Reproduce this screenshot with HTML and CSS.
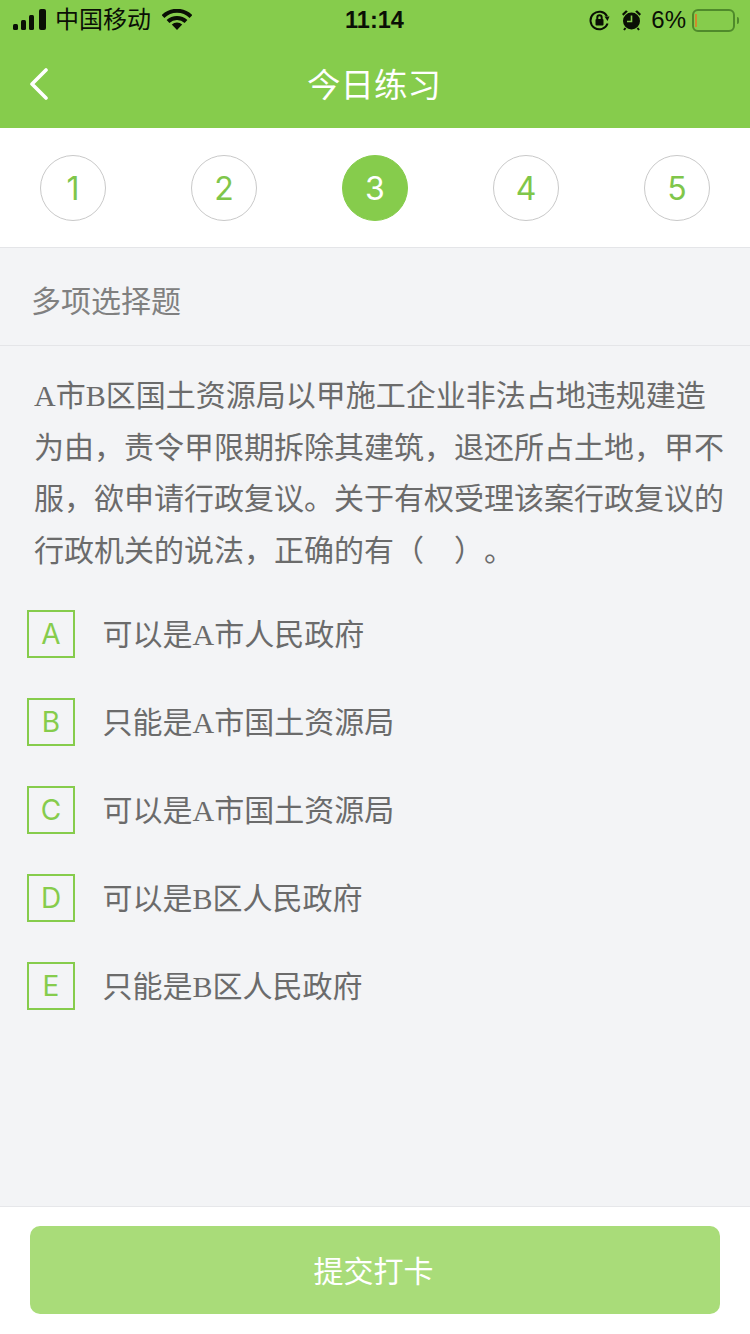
FILE: index.html
```html
<!DOCTYPE html>
<html lang="zh-CN">
<head>
  <meta charset="UTF-8">
  <meta name="viewport" content="width=device-width, initial-scale=1.0">
  <title>今日练习</title>
  <link rel="stylesheet" href="styles.css">
</head>

<body>
<div id="container">
  <div id="top_box">
    <div id="status_bar">
      <div class="status_left">
        <svg class="signal" width="34" height="22" viewBox="0 0 34 22">
          <rect x="0" y="15" width="5" height="6" rx="1.5" />
          <rect x="8" y="11" width="5" height="10" rx="1.5" />
          <rect x="16" y="6" width="5" height="15" rx="1.5" />
          <rect x="26" y="0" width="7" height="21" rx="2" />
        </svg>
        <span class="carrier">中国移动</span>
        <svg class="wifi" width="30" height="22" viewBox="0 0 30 22">
          <path d="M1 7.5 A20 20 0 0 1 29 7.5" />
          <path d="M6 12.5 A13 13 0 0 1 24 12.5" />
          <path class="wifi_dot" d="M15 21 L9.8 15.6 A7.5 7.5 0 0 1 20.2 15.6 Z" />
        </svg>
      </div>
      <div class="status_time">11:14</div>
      <div class="status_right">
        <svg class="lock" width="21" height="21" viewBox="0 0 21 21">
          <path d="M18 6.2 A8.8 8.8 0 1 0 18.6 13.5" />
          <path class="solid" d="M15.5 6.5 L20.5 6.5 L18.5 11 Z" />
          <rect class="solid" x="6.5" y="9" width="8" height="6.5" rx="1" />
          <path d="M8.3 9 V7.5 A2.2 2.2 0 0 1 12.7 7.5 V9" />
        </svg>
        <svg class="alarm" width="21" height="22" viewBox="0 0 21 22">
          <circle class="solid" cx="10.5" cy="12" r="8.5" />
          <path class="solid" d="M1 5 L5 1.2 L6.8 2.6 L2.4 6.8 Z M20 5 L16 1.2 L14.2 2.6 L18.6 6.8 Z" />
          <path class="hands" d="M10.5 6.5 V12.5 H6" />
          <path d="M4.5 19 L3 21 M16.5 19 L18 21" />
        </svg>
        <span class="percent">6%</span>
        <div class="battery"><div class="battery_level"></div></div>
        <div class="battery_tip"></div>
      </div>
    </div>

    <div id="nav_bar">
      <svg class="back" width="20" height="32" viewBox="0 0 20 32">
        <path d="M17 2 L3 16 L17 30" />
      </svg>
      <div class="nav_title">今日练习</div>
    </div>
  </div>

  <div id="steps">
    <div class="step">1</div>
    <div class="step">2</div>
    <div class="step active">3</div>
    <div class="step">4</div>
    <div class="step">5</div>
  </div>

  <div id="main_box">
    <div class="type_label">多项选择题</div>

    <div class="question">A市B区国土资源局以甲施工企业非法占地违规建造为由，责令甲限期拆除其建筑，退还所占土地，甲不服，欲申请行政复议。关于有权受理该案行政复议的行政机关的说法，正确的有（&emsp;）。</div>

    <div class="options">
      <div class="option">
        <div class="option_key">A</div>
        <div class="option_text">可以是A市人民政府</div>
      </div>
      <div class="option">
        <div class="option_key">B</div>
        <div class="option_text">只能是A市国土资源局</div>
      </div>
      <div class="option">
        <div class="option_key">C</div>
        <div class="option_text">可以是A市国土资源局</div>
      </div>
      <div class="option">
        <div class="option_key">D</div>
        <div class="option_text">可以是B区人民政府</div>
      </div>
      <div class="option">
        <div class="option_key">E</div>
        <div class="option_text">只能是B区人民政府</div>
      </div>
    </div>
  </div>

  <div id="footer_box">
    <div class="submit">提交打卡</div>
  </div>
</div>
</body>
</html>
```

FILE: styles.css
```css
* {
    box-sizing: border-box;
    padding: 0;
    margin: 0;
    font-family: "Liberation Sans", "Noto Sans CJK SC", sans-serif;
}

body, html {
    width: 100%;
    height: 100%;
    background: #f3f4f6;
    overflow: hidden;
}

#container {
    display: flex;
    flex-direction: column;
    height: 1334px;
}

#top_box {
    background: #86cc4c;
    height: 128px;
}

#status_bar {
    display: flex;
    align-items: center;
    justify-content: space-between;
    height: 40px;
    padding: 0 11px 0 13px;
    color: #0a0f05;
}

.status_left, .status_right {
    display: flex;
    align-items: center;
    width: 240px;
}

.status_right {
    justify-content: flex-end;
}

.signal {
    fill: #0a0f05;
    margin-right: 8px;
}

.carrier {
    font-size: 24px;
    line-height: 42px;
    width: 96px;
    white-space: nowrap;
}

.wifi {
    margin-left: 11px;
    fill: none;
    stroke: #0a0f05;
    stroke-width: 4;
}

.wifi .wifi_dot {
    fill: #0a0f05;
    stroke: none;
}

.status_time {
    font-size: 23.5px;
    font-weight: 700;
    margin-right: 3px;
    margin-top: 1px;
}

.lock, .alarm {
    fill: none;
    stroke: #0a0f05;
    stroke-width: 2;
}

.lock .solid, .alarm .solid {
    fill: #0a0f05;
    stroke: none;
}

.alarm .hands {
    stroke: #86cc4c;
    stroke-width: 1.6;
}

.alarm {
    margin-left: 11px;
}

.percent {
    font-size: 24px;
    margin-left: 9px;
    margin-right: 6px;
}

.battery {
    width: 43px;
    height: 23px;
    padding: 3px 1px;
    border: 2px solid #4f8a2b;
    border-radius: 6px;
}

.battery_level {
    width: 2px;
    height: 100%;
    background: #d08a2c;
}

.battery_tip {
    width: 2px;
    height: 7px;
    margin-left: 2px;
    background: #4f8a2b;
    border-radius: 0 2px 2px 0;
}

#nav_bar {
    position: relative;
    display: flex;
    align-items: center;
    justify-content: center;
    height: 88px;
}

.back {
    position: absolute;
    left: 29px;
    top: 28px;
    fill: none;
    stroke: white;
    stroke-width: 3.6;
    stroke-linecap: round;
    stroke-linejoin: round;
}

.nav_title {
    color: white;
    font-size: 33.5px;
    margin: 0 2px 4px 0;
}

#steps {
    display: flex;
    justify-content: space-between;
    height: 120px;
    padding: 27px 40px 0;
    background: white;
    border-bottom: 1px solid #e4e5e8;
}

.step {
    display: flex;
    align-items: center;
    justify-content: center;
    width: 66px;
    height: 66px;
    border: 1px solid #c9c9c9;
    border-radius: 50%;
    color: #7fc64a;
    font-family: "Inter", sans-serif;
    font-size: 32px;
}

.step.active {
    background: #86cc4c;
    border-color: #86cc4c;
    color: white;
}

#main_box {
    flex: 1;
}

.type_label {
    height: 98px;
    padding-left: 31px;
    line-height: 108px;
    font-size: 30px;
    color: #808080;
    border-bottom: 1px solid #e4e5e8;
}

.question {
    padding: 24px 24px 0 34px;
    font-family: "Liberation Serif", "Noto Sans CJK SC", serif;
    font-size: 30px;
    line-height: 51.6px;
    color: #6b6b6b;
    text-spacing-trim: space-all;
}

.options {
    padding: 34px 0 0 27px;
}

.option {
    display: flex;
    align-items: center;
    gap: 27.5px;
    height: 48px;
    margin-bottom: 40px;
}

.option_key {
    display: flex;
    align-items: center;
    justify-content: center;
    width: 48px;
    height: 48px;
    border: 2px solid #86cc4c;
    color: #86cc4c;
    font-family: "Inter", sans-serif;
    font-size: 28px;
}

.option_text {
    font-family: "Liberation Serif", "Noto Sans CJK SC", serif;
    font-size: 30px;
    color: #6b6b6b;
    margin-bottom: 4px;
}

#footer_box {
    height: 128px;
    padding: 19px 30px 0;
    background: white;
    border-top: 1px solid #e6e7ea;
}

.submit {
    display: flex;
    align-items: center;
    justify-content: center;
    height: 88px;
    padding: 0 3px 2px 0;
    background: #a9dc79;
    border-radius: 10px;
    color: white;
    font-size: 30px;
}
```
